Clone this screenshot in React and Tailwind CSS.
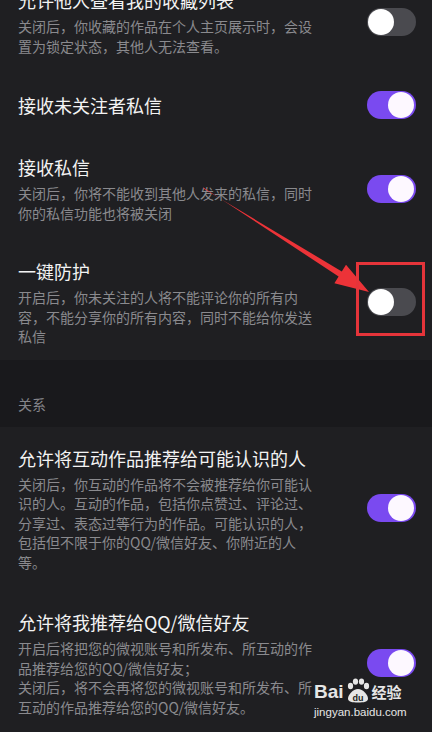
import React, { useState } from "react";

const settings = [
  {
    id: "collect",
    title: "允许他人查看我的收藏列表",
    desc: ["关闭后，你收藏的作品在个人主页展示时，会设", "置为锁定状态，其他人无法查看。"],
    on: false,
  },
  { id: "stranger", title: "接收未关注者私信", desc: [], on: true },
  {
    id: "message",
    title: "接收私信",
    desc: ["关闭后，你将不能收到其他人发来的私信，同时", "你的私信功能也将被关闭"],
    on: true,
  },
  {
    id: "protect",
    title: "一键防护",
    desc: [
      "开启后，你未关注的人将不能评论你的所有内",
      "容，不能分享你的所有内容，同时不能给你发送",
      "私信",
    ],
    on: false,
  },
];

const relation = [
  {
    id: "works",
    title: "允许将互动作品推荐给可能认识的人",
    desc: [
      "关闭后，你互动的作品将不会被推荐给你可能认",
      "识的人。互动的作品，包括你点赞过、评论过、",
      "分享过、表态过等行为的作品。可能认识的人，",
      "包括但不限于你的QQ/微信好友、你附近的人",
      "等。",
    ],
    on: true,
  },
  {
    id: "friends",
    title: "允许将我推荐给QQ/微信好友",
    desc: [
      "开启后将把您的微视账号和所发布、所互动的作",
      "品推荐给您的QQ/微信好友；",
      "关闭后，将不会再将您的微视账号和所发布、所",
      "互动的作品推荐给您的QQ/微信好友。",
    ],
    on: true,
  },
];

// Interruptor estilo móvil
const Toggle = ({ on, onClick }) => (
  <button
    onClick={onClick}
    className={`relative h-[28px] w-[49px] shrink-0 rounded-full ${on ? "bg-[#7a4af0]" : "bg-[#4a4a4f]"}`}
  >
    <span
      className={`absolute top-[1px] h-[26px] w-[26px] rounded-full ${on ? "left-[21px] bg-[#fdf8ff]" : "left-[1px] bg-white"}`}
    />
  </button>
);

const Row = ({ item, on, onToggle, pad = "pb-[17px]" }) => (
  <div className={`flex items-center justify-between pl-[18px] pr-[16px] pt-[18px] ${pad}`}>
    <div>
      <div className="text-[18px] leading-[26px] text-[#f3f3f3]">{item.title}</div>
      {item.desc.length > 0 && (
        <div className="mt-[4px] text-[14px] leading-[19.5px] text-[#8a8a8e]">
          {item.desc.map((line, i) => (
            <div key={i} className="whitespace-nowrap">
              {line}
            </div>
          ))}
        </div>
      )}
    </div>
    <Toggle on={on} onClick={onToggle} />
  </div>
);

export default function App() {
  const [state, setState] = useState(
    Object.fromEntries([...settings, ...relation].map((s) => [s.id, s.on]))
  );
  const flip = (id) => setState({ ...state, [id]: !state[id] });

  return (
    <div
      className="relative h-[732px] w-[432px] overflow-hidden bg-[#1f1f22]"
      style={{ fontFamily: '"Noto Sans CJK SC", "Noto Sans", sans-serif' }}
    >
      <div className="-mt-[31px]">
        {/* Ajustes de privacidad */}
        <div className="bg-[#1f1f22]">
          {settings.map((s, i) => (
            <Row
              key={s.id}
              item={s}
              on={state[s.id]}
              onToggle={() => flip(s.id)}
              pad={i === settings.length - 1 ? "pb-[13px]" : "pb-[17px]"}
            />
          ))}
        </div>

        {/* Cabecera de sección */}
        <div className="bg-[#19191c] pl-[18px] pt-[34px] pb-[13px] text-[14px] leading-[20px] text-[#85858a]">关系</div>

        <div className="bg-[#1f1f22]">
          {relation.map((s) => (
            <Row key={s.id} item={s} on={state[s.id]} onToggle={() => flip(s.id)} pad="pb-[19px]" />
          ))}
        </div>
      </div>

      {/* Flecha y recuadro rojo */}
      <svg className="pointer-events-none absolute left-0 top-0" width="432" height="732">
        <polygon
          points="203,187.2 203.8,188.8 341.8,271.5 346,264.7 369,292 334.4,283.3 338.6,276.5"
          fill="#ec3338"
        />
        <rect x="357.5" y="263.5" width="66" height="71" fill="none" stroke="#e5343a" strokeWidth="3" />
      </svg>

      {/* Marca de agua */}
      <div className="pointer-events-none absolute left-[314px] top-[678px] flex flex-col items-start text-[#e6e6e6]">
        <div className="flex items-end">
          <span className="text-[19px] font-bold leading-[22px]" style={{ fontFamily: '"Liberation Sans", sans-serif' }}>
            Bai
          </span>
          <svg width="26" height="25" viewBox="0 0 26 25" className="mx-[1px]">
            <ellipse cx="5.5" cy="8" rx="2.6" ry="3.2" fill="#e6e6e6" />
            <ellipse cx="10.5" cy="3.6" rx="2.6" ry="3.2" fill="#e6e6e6" />
            <ellipse cx="16.5" cy="3.6" rx="2.6" ry="3.2" fill="#e6e6e6" />
            <ellipse cx="21.5" cy="8" rx="2.6" ry="3.2" fill="#e6e6e6" />
            <path d="M13 11 C8 11 3 17 3 20.5 C3 24 7 24.5 13 24.5 C19 24.5 23 24 23 20.5 C23 17 18 11 13 11 Z" fill="#e6e6e6" />
            <text x="13" y="22.5" textAnchor="middle" fontSize="9" fontWeight="bold" fill="#1f1f22" fontFamily="Liberation Sans, sans-serif">
              du
            </text>
          </svg>
          <span className="text-[15px] font-bold leading-[22px]">经验</span>
        </div>
        <span className="mt-[3px] text-[11.5px] leading-[13px]" style={{ fontFamily: '"Liberation Sans", sans-serif' }}>
          jingyan.baidu.com
        </span>
      </div>
    </div>
  );
}
